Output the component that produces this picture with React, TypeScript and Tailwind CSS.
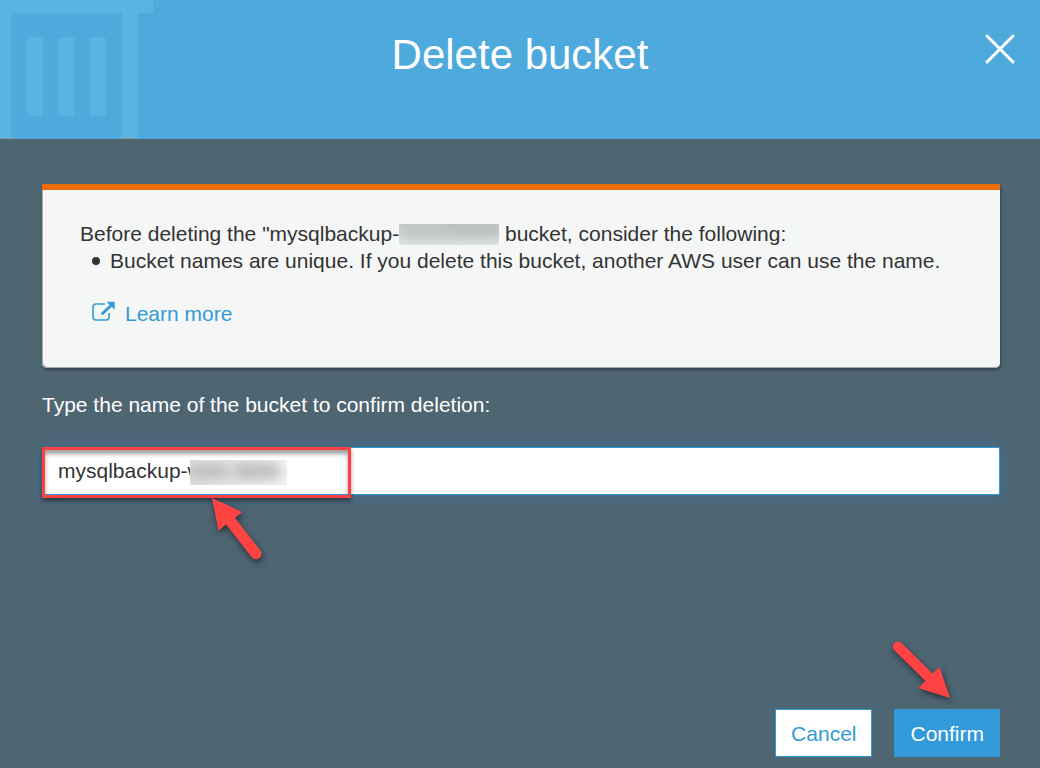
import React, { useState } from "react";

function BinArt() {
  return (
    <svg
      className="absolute left-0 top-0"
      width="160"
      height="139"
      viewBox="0 0 160 139"
      aria-hidden="true"
    >
      <path d="M0 0H153.500V10Q153.500 13 150.500 13H138V139H120Q122 136 122 132V13H11V132Q11 136 13 139H0Z" fill="#57b5e4" />
      <rect x="27" y="37" width="16" height="79" rx="3" fill="#57b5e4" />
      <rect x="58.500" y="37" width="16" height="79" rx="3" fill="#57b5e4" />
      <rect x="90" y="37" width="16" height="79" rx="3" fill="#57b5e4" />
      <path d="M0 138H13.500V139H0ZM120 138H137V139H120Z" fill="#8f9c9e" />
    </svg>
  );
}

function ExternalIcon() {
  return (
    <svg width="24" height="22" viewBox="0 0 24 22" fill="none" aria-hidden="true">
      <path
        d="M13 4H4Q1 4 1 7V17Q1 20 4 20H14Q17 20 17 17V13"
        stroke="#329ad6"
        strokeWidth="1.600"
      />
      <path d="M10.500 13.500L19 5.500" stroke="#329ad6" strokeWidth="3" strokeLinecap="round" />
      <path d="M14.500 1.700H22.700V9.700Z" fill="#329ad6" />
    </svg>
  );
}

export default function App() {
  const [name, setName] = useState("mysqlbackup-w");

  return (
    <div className="flex min-h-screen flex-col bg-[#4e6572] font-['Liberation_Sans',Arial,sans-serif] text-[21px] leading-[27px] text-[#333333]">
      <header className="relative h-[139px] bg-[#4ea9dd] pt-[31px]">
        <BinArt />
        <h1 className="relative text-center text-[42px] leading-[48px] text-white">Delete bucket</h1>
        <button type="button" aria-label="Close" className="absolute right-6 top-[33px] cursor-pointer">
          <svg width="32" height="32" viewBox="0 0 32 32" aria-hidden="true">
            <path d="M3 3L29 29M29 3L3 29" stroke="#ffffff" strokeWidth="3" strokeLinecap="round" />
          </svg>
        </button>
      </header>

      <main className="flex flex-1 flex-col pb-[11px] pl-[42px] pr-10 pt-[45px]">
        <section className="rounded-b-[5px] border-t-[6px] border-[#ec6c09] bg-[#f5f7f7] pb-[41px] pl-[38px] pr-8 pt-[30px] shadow-[inset_1px_-1px_0_#a3adaf,1px_2px_3px_#34454f]">
          <p>
            Before deleting the "mysqlbackup-
            <span className="relative -mb-1 inline-block h-[21px] w-[100px] overflow-hidden bg-linear-to-b from-[#c6cacb] to-[#e6e9e9] align-baseline">
              <span className="absolute left-0 top-1 h-3 w-12 bg-[#a5a8a9] opacity-50 blur-[7px]" />
              <span className="absolute left-12 top-0 h-[15px] w-[56px] bg-[#a0a4a5] opacity-50 blur-[7px]" />
            </span>{" "}
            bucket, consider the following:
          </p>
          <ul className="list-none">
            <li className="flex items-center">
              <span className="ml-3 mr-[10px] size-2 shrink-0 rounded-full bg-[#333333]" />
              <span>Bucket names are unique. If you delete this bucket, another AWS user can use the name.</span>
            </li>
          </ul>
          <a href="#learn-more" className="ml-3 mt-[26px] flex w-fit gap-[9px] text-[#329ad6]">
            <ExternalIcon />
            Learn more
          </a>
        </section>

        <label htmlFor="bucket-name" className="mt-[23px] block text-white">
          Type the name of the bucket to confirm deletion:
        </label>

        <div className="relative mt-[29px]">
          <input
            id="bucket-name"
            type="text"
            value={name}
            onChange={(e) => setName(e.target.value)}
            className="block h-12 w-full rounded-[2px] border border-[#329ad6] bg-white px-[15px] text-[#333333] shadow-[0_0_18px_#417196] outline-none"
          />
          <div className="pointer-events-none absolute left-[148px] top-[13px] h-[25px] w-[97px] overflow-hidden bg-linear-to-r from-[#dedede] to-[#f4f4f4]">
            <div className="absolute left-0 top-[5px] h-[13px] w-10 rounded bg-[#b0b0b0] opacity-80 blur-[6px]" />
            <div className="absolute left-11 top-[3px] h-[16px] w-[46px] rounded bg-[#b0b0b0] opacity-80 blur-[6px]" />
          </div>
          <div className="pointer-events-none absolute left-0 top-0 h-[51px] w-[309px] border-[3px] border-[#fb4141] shadow-[0_3px_4px_#00000070,inset_0_4px_4px_#00000060]" />
          <svg
            className="pointer-events-none absolute left-[164px] top-[49px] overflow-visible drop-shadow-[1px_3px_3px_#00000080]"
            width="60"
            height="66"
            viewBox="0 0 60 66"
            aria-hidden="true"
          >
            <path d="M6 2L36 16L29 22L54 54A5 5 0 0 1 46 61.500L20 28.500L12.500 34.500Z" fill="#ff4242" />
          </svg>
        </div>

        <footer className="mt-auto flex justify-end gap-[22px]">
          <button
            type="button"
            className="h-12 cursor-pointer border border-[#329ad6] bg-white px-[15px] text-[#329ad6]"
          >
            Cancel
          </button>
          <div className="relative">
            <button type="button" className="h-12 cursor-pointer bg-[#329ad9] px-4 text-white">
              Confirm
            </button>
            <svg
              className="pointer-events-none absolute -top-[69px] left-[-4px] overflow-visible drop-shadow-[1px_3px_3px_#00000080]"
              width="64"
              height="62"
              viewBox="0 0 64 62"
              aria-hidden="true"
            >
              <path d="M60 58L28.500 48L35.500 41L4.500 10.500A5 5 0 0 1 11.500 3L42.500 33.500L49.500 27Z" fill="#ff4242" />
            </svg>
          </div>
        </footer>
      </main>
    </div>
  );
}
